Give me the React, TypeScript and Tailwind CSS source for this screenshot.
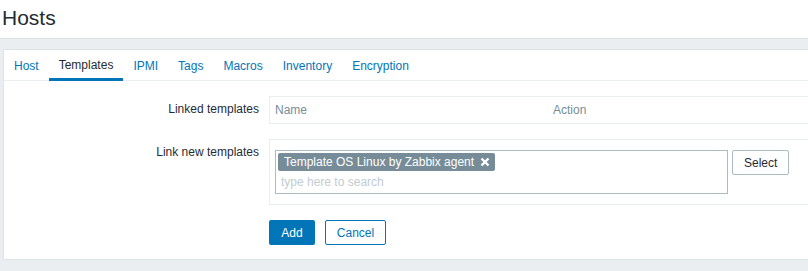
const tabs = ['Host', 'Templates', 'IPMI', 'Tags', 'Macros', 'Inventory', 'Encryption'];

function XIcon() {
  return (
    <svg width="10" height="10" viewBox="0 0 10 10" className="shrink-0">
      <path d="M1.5 1.5 L8.5 8.5 M8.5 1.5 L1.5 8.5" stroke="#ffffff" strokeWidth="2.4" strokeLinecap="butt" />
    </svg>
  );
}

export default function App() {
  return (
    <div className="w-[808px] h-[271px] overflow-hidden bg-[#ebeef0] text-[12px] text-[#1f2c33] font-['Liberation_Sans',Arial,sans-serif]">
      <header className="h-[39px] bg-white border-b border-[#dfe4e7] pl-[2px] flex items-center">
        <h1 className="text-[21px] leading-none text-[#1f2c33] -mt-[4px]">Hosts</h1>
      </header>

      <div className="mt-[10px] ml-[3px] h-[211px] bg-white border border-r-0 border-[#dfe4e7]">
        {/* tabs */}
        <ul className="flex h-[31px] border-b border-[#ebeef0] pl-0">
          {tabs.map((t) => (
            <li
              key={t}
              className={
                t === 'Templates'
                  ? 'h-[31px] px-[10px] flex items-center pt-[2px] border-b-[3px] border-[#0275b8] text-[#1f2c33] -mb-px'
                  : 'h-[30px] px-[10px] flex items-center pt-px text-[#0275b8]'
              }
            >
              {t}
            </li>
          ))}
        </ul>

        {/* form */}
        <div className="grid grid-cols-[265px_1fr] pt-[15px]">
          <label className="pr-[10px] text-right leading-[14px] pt-[6px]">Linked templates</label>
          <div className="h-[28px] border border-r-0 border-[#ebeef0] flex items-center px-[5px] text-[#768d99]">
            <span className="w-[278px]">Name</span>
            <span>Action</span>
          </div>

          <label className="pr-[10px] text-right leading-[14px] pt-[6px] mt-[15px]">Link new templates</label>
          <div className="mt-[15px] h-[66px] border border-r-0 border-[#ebeef0] pt-[10px] pl-[5px] flex items-start gap-[4px]">
            <div className="w-[453px] h-[44px] border border-[#acbbc2] p-[2px] flex flex-col">
              <div className="flex">
                <span className="h-[18px] bg-[#768d99] text-white rounded-[2px] pl-[6px] pr-[5px] flex items-center gap-[6px]">
                  Template OS Linux by Zabbix agent
                  <XIcon />
                </span>
              </div>
              <div className="h-[21px] flex items-center pl-[3px] pt-px text-[#c2ccd1]">type here to search</div>
            </div>
            <button className="h-[25px] px-[11px] border border-[#acbbc2] rounded-[2px] bg-white text-[#1f2c33]">Select</button>
          </div>

          <div />
          <div className="mt-[15px] flex gap-[10px]">
            <button className="h-[25px] w-[46px] rounded-[2px] bg-[#0275b8] text-white">Add</button>
            <button className="h-[25px] w-[61px] rounded-[2px] border border-[#0275b8] bg-white text-[#0275b8]">Cancel</button>
          </div>
        </div>
      </div>
    </div>
  );
}
